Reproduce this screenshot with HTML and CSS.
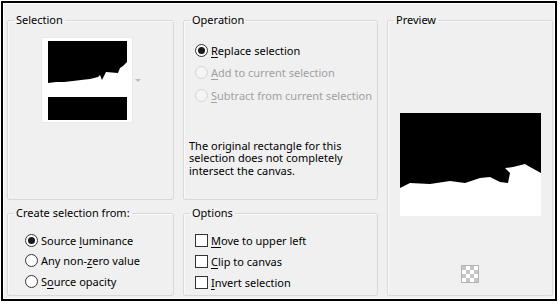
FILE: index.html
```html
<!DOCTYPE html>
<html>
<head>
    <title>Create Selection</title>
    <link rel="stylesheet" href="styles.css">
</head>
<body>
    <div class="frame">
        <div class="column">
            <fieldset class="group group-top">
                <legend>Selection</legend>
                <div class="thumb-row">
                    <div class="thumb">
                        <svg width="79" height="79" viewBox="0 0 79 79">
                            <rect width="79" height="79" fill="#000"/>
                            <path d="M0 42 L8 41 L16 41 L25 40 L33 39 L42 38 L50 36 L52 34 L54 39 L58 31 L70 32 L72 27 L75 25 L79 21 L79 56 L0 56 Z" fill="#fff"/>
                        </svg>
                    </div>
                    <span class="drop-arrow"></span>
                </div>
            </fieldset>
            <fieldset class="group group-bottom">
                <legend>Create selection from:</legend>
                <div class="list list-source">
                    <div class="opt"><span class="radio checked"></span><span>Source <u>l</u>uminance</span></div>
                    <div class="opt"><span class="radio"></span><span>Any non-<u>z</u>ero value</span></div>
                    <div class="opt"><span class="radio"></span><span>S<u>o</u>urce opacity</span></div>
                </div>
            </fieldset>
        </div>

        <div class="column">
            <fieldset class="group group-top">
                <legend>Operation</legend>
                <div class="list list-operation">
                    <div class="opt"><span class="radio checked"></span><span><u>R</u>eplace selection</span></div>
                    <div class="opt disabled"><span class="radio"></span><span><u>A</u>dd to current selection</span></div>
                    <div class="opt disabled"><span class="radio"></span><span><u>S</u>ubtract from current selection</span></div>
                </div>
                <p class="note">The original rectangle for this selection does not completely intersect the canvas.</p>
            </fieldset>
            <fieldset class="group group-bottom">
                <legend>Options</legend>
                <div class="list list-options">
                    <div class="opt"><span class="check"></span><span><u>M</u>ove to upper left</span></div>
                    <div class="opt"><span class="check"></span><span><u>C</u>lip to canvas</span></div>
                    <div class="opt"><span class="check"></span><span><u>I</u>nvert selection</span></div>
                </div>
            </fieldset>
        </div>

        <fieldset class="group preview">
            <legend>Preview</legend>
            <div class="preview-body">
                <svg class="preview-img" width="141" height="103" viewBox="0 0 141 103">
                    <rect width="141" height="103" fill="#000"/>
                    <path d="M0 75 L10 70 L30 71 L50 68 L65 70 L80 65 L90 64 L100 69 L108 70 L110 60 L105 55 L113 54 L125 51 L130 54 L141 60 L141 103 L0 103 Z" fill="#fff"/>
                </svg>
                <svg class="checker" width="18" height="18" viewBox="0 0 18 18">
                    <rect x="0.5" y="0.5" width="17" height="17" fill="#fff" stroke="#b4b4b4"/>
                    <g fill="#c6c6c6">
                        <rect x="1" y="1" width="4" height="4"/>
                        <rect x="9" y="1" width="4" height="4"/>
                        <rect x="5" y="5" width="4" height="4"/>
                        <rect x="13" y="5" width="4" height="4"/>
                        <rect x="1" y="9" width="4" height="4"/>
                        <rect x="9" y="9" width="4" height="4"/>
                        <rect x="5" y="13" width="4" height="4"/>
                        <rect x="13" y="13" width="4" height="4"/>
                    </g>
                </svg>
            </div>
        </fieldset>
    </div>
</body>
</html>
```

FILE: styles.css
```css
body {
    margin: 1px;
    background: #fff;
    font-family: "Noto Sans", sans-serif;
    font-size: 11px;
    color: #000;
}
.frame {
    width: 546px;
    height: 283px;
    border: 2px solid #000;
    box-shadow: inset 0 0 0 1px #fff;
    padding: 10px 2px 3px 4px;
    background: #f0f0f0;
    display: grid;
    grid-template-columns: 167px 195px 166px;
    column-gap: 9px;
}
.column {
    display: flex;
    flex-direction: column;
    gap: 6px;
}
.group {
    margin: 0;
    padding: 0;
    border: 1px solid #d9d9d9;
    border-radius: 2px;
    box-shadow: inset 1px 1px 0 #fafafa;
    min-width: 0;
    box-sizing: border-box;
}
.group legend {
    margin-left: 6px;
    padding: 0 2px;
    line-height: 14px;
}
.group-top { height: 187px; }
.group-bottom { height: 90px; }
.preview { height: 283px; }

.thumb-row {
    display: flex;
    align-items: center;
    margin: 11px 0 0 34px;
}
.thumb {
    width: 90px;
    height: 84px;
    background: #fff;
    box-shadow: 0 0 0 1px #e9e9e9;
    padding: 3px 0 0 6px;
    box-sizing: border-box;
}
.thumb svg { display: block; }
.drop-arrow {
    margin-left: 3px;
    border-left: 3px solid transparent;
    border-right: 3px solid transparent;
    border-top: 3px solid #bcbcbc;
}

.list { display: flex; flex-direction: column; }
.opt {
    display: flex;
    align-items: center;
    white-space: nowrap;
}
.opt u { text-decoration-thickness: 1px; text-underline-offset: 2px; }
.list-operation { padding: 12px 0 0 11px; }
.list-operation .opt { height: 22.5px; }
.list-source { padding: 10px 0 0 17px; }
.list-source .opt { height: 20.5px; }
.list-options { padding: 9.5px 0 0 11px; }
.list-options .opt { height: 21px; }

.radio, .check {
    width: 13px;
    height: 13px;
    box-sizing: border-box;
    border: 1px solid #333;
    background: #fff;
    margin-right: 3px;
    flex: none;
}
.radio { border-radius: 50%; position: relative; }
.radio.checked::after {
    content: "";
    position: absolute;
    left: 2px;
    top: 2px;
    width: 7px;
    height: 7px;
    border-radius: 50%;
    background: #1a1a1a;
}
.disabled { color: #a0a0a0; }
.disabled .radio { border-color: #d4d4d4; background: #f4f4f4; }

.note {
    margin: 33px 0 0 5px;
    line-height: 12.5px;
    width: 180px;
}

.preview-body {
    display: flex;
    flex-direction: column;
    align-items: center;
}
.preview-img { margin-top: 86px; display: block; }
.checker { margin-top: 49px; display: block; }
```
